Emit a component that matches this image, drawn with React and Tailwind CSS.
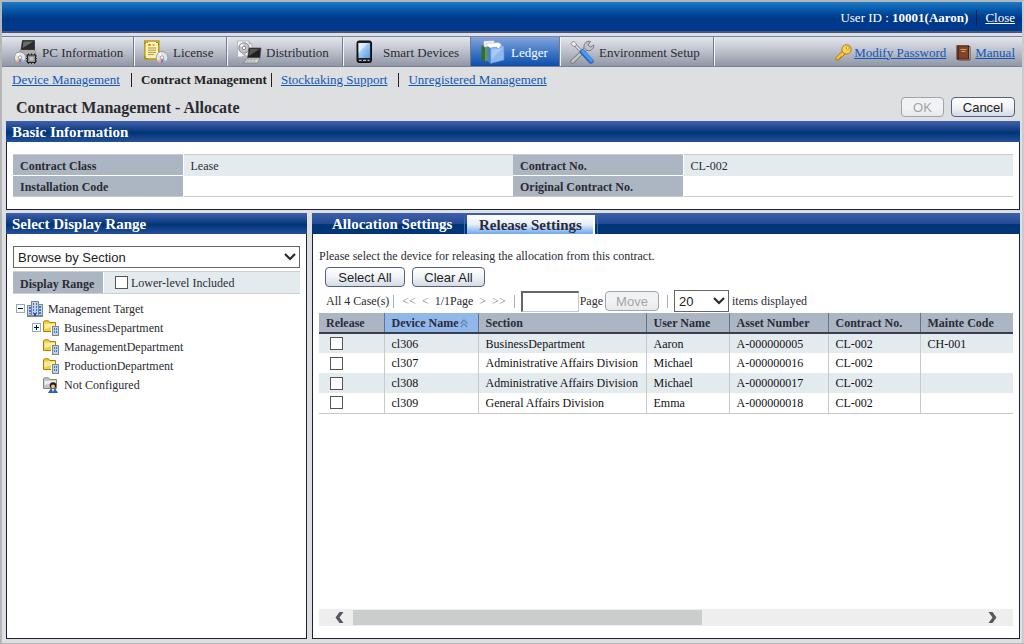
import { useState } from "react";

const devices = [
    { id: "cl306", section: "BusinessDepartment", user: "Aaron", asset: "A-000000005", contract: "CL-002", mainte: "CH-001" },
    { id: "cl307", section: "Administrative Affairs Division", user: "Michael", asset: "A-000000016", contract: "CL-002", mainte: "" },
    { id: "cl308", section: "Administrative Affairs Division", user: "Michael", asset: "A-000000017", contract: "CL-002", mainte: "" },
    { id: "cl309", section: "General Affairs Division", user: "Emma", asset: "A-000000018", contract: "CL-002", mainte: "" }
];

const Disc = ({ x, y, r = 6 }) => (
    <g>
        <circle cx={x} cy={y} r={r} fill="#e4e4e6" stroke="#8b8b90" strokeWidth="0.8" />
        <path d={`M${x} ${y}L${x - 2} ${y + r - 0.6}L${x + 2} ${y + r - 0.6}Z`} fill="#c04fd8" />
        <path d={`M${x} ${y}L${x + 2} ${y + r - 0.6}L${x + 4} ${y + r - 2.4}Z`} fill="#4fd0d8" />
        <path d={`M${x} ${y}L${x - 2} ${y + r - 0.6}L${x - 4} ${y + r - 2.4}Z`} fill="#e8c24a" />
        <path d={`M${x} ${y}L${x - 4} ${y - r + 2}L${x - 1} ${y - r + 0.8}Z`} fill="#fff" />
        <circle cx={x} cy={y} r="1.7" fill="#fff" stroke="#8b8b90" strokeWidth="0.8" />
    </g>
);

const PcIcon = () => (
    <svg width="24" height="24" viewBox="0 0 24 24">
        <path d="M8.5 0.5H20.5V10H7Z" fill="#2c2c2e" stroke="#111" strokeWidth="0.6" />
        <path d="M9.5 1.5H19.5L8.5 8Z" fill="#6b6b6e" />
        <path d="M7 10H20.5L22 14H4Z" fill="#c6c6c8" stroke="#6c6c6c" strokeWidth="0.6" />
        <path d="M6.5 12H20.5" stroke="#88888c" strokeWidth="0.8" />
        <Disc x={6} y={17.5} r={5.6} />
        <path d="M12 16H23M12 18.5H23M12 21H23M14.5 13.5V24M17.5 13.5V24M20.5 13.5V24" stroke="#2b2b2b" strokeWidth="1" />
        <rect x="13.5" y="15" width="8" height="7.5" fill="#8f8f90" stroke="#222" />
        <rect x="15.5" y="17" width="4" height="3.5" fill="#c4c4c4" />
    </svg>
);

const LicenseIcon = () => (
    <svg width="25" height="24" viewBox="0 0 25 24">
        <rect x="0.8" y="1" width="14" height="18" fill="#fdf4bd" stroke="#c79c13" strokeWidth="1.6" />
        <path d="M1 4V2.5H4M12 2.5H14.5V5M1 16V18.5H4" fill="none" stroke="#5c7a20" strokeWidth="0.8" strokeDasharray="2 1" />
        <circle cx="5.5" cy="5" r="1.3" fill="#d8881a" />
        <circle cx="9.5" cy="5" r="1" fill="#d8881a" />
        <path d="M4 8H12M4 10.2H12M4 12.4H12M4 14.6H10" stroke="#9a7a22" strokeWidth="0.8" />
        <Disc x={18} y={17.5} r={5.9} />
    </svg>
);

const DistributionIcon = () => (
    <svg width="25" height="24" viewBox="0 0 25 24">
        <path d="M0.5 1H12L15 4V17H0.5Z" fill="#f4f4f6" stroke="#a9a9b0" strokeWidth="0.8" />
        <path d="M12 1V4H15" fill="#d4d4d8" stroke="#a9a9b0" strokeWidth="0.8" />
        <circle cx="7" cy="8" r="5.2" fill="#c4c4c8" stroke="#707078" strokeWidth="0.8" />
        <path d="M7 8L2.8 6A4.6 4.6 0 0 1 6 3.4Z" fill="#f6f6f6" />
        <circle cx="7" cy="8" r="1.7" fill="#fff" stroke="#777" strokeWidth="0.8" />
        <path d="M5 12L12 20M5 17H11" stroke="#b4b4b8" strokeWidth="2" />
        <path d="M12 8H24L23 18H10.5Z" fill="#202022" stroke="#555" strokeWidth="0.7" />
        <path d="M13 9H22.5L12 16Z" fill="#56565c" />
        <path d="M10.5 18H23L20.5 23H6.5Z" fill="#d9d9db" stroke="#777" strokeWidth="0.7" />
        <path d="M10.5 19.5H20.5M9.5 21.2H19" stroke="#8d8d90" strokeWidth="0.8" strokeDasharray="2 1" />
    </svg>
);

const PhoneIcon = () => (
    <svg width="24" height="24" viewBox="0 0 24 24">
        <defs>
            <linearGradient id="screen" x1="0" y1="0" x2="1" y2="1">
                <stop offset="0" stopColor="#e2effc" />
                <stop offset="1" stopColor="#4f9be8" />
            </linearGradient>
        </defs>
        <rect x="2" y="1" width="14.5" height="21.5" rx="2" fill="#222226" stroke="#0c0c0e" />
        <rect x="3.5" y="3" width="11.5" height="15" fill="url(#screen)" />
        <path d="M3.5 3H13L3.5 13Z" fill="#fff" opacity="0.5" />
        <path d="M4 20.3H6.5M8 20.3H11M12.5 20.3H14.5" stroke="#b8b8c0" strokeWidth="1.2" />
    </svg>
);

const LedgerIcon = () => (
    <svg width="24" height="24" viewBox="0 0 24 24">
        <path d="M0.5 6L4 4.5V20.5L0.5 21Z" fill="#356b35" />
        <path d="M4 4.5H9V21H4Z" fill="#5e9a50" />
        <path d="M2.5 1L13 0.5L14.5 6L6 7H3Z" fill="#f4f4f2" stroke="#99a" strokeWidth="0.5" />
        <path d="M5 3.5L18 2.5L21 5.5L18 9H8Z" fill="#fff" stroke="#aab" strokeWidth="0.5" />
        <path d="M6.5 6L9.5 8V23.5L6.5 21Z" fill="#4a7fcb" />
        <path d="M9.5 8L15.5 7L17.5 9.5L20 5.5L23 6V20L9.5 23.5Z" fill="#8db8f0" stroke="#5a8cd4" strokeWidth="0.6" />
        <path d="M10.5 10L22 8L10.5 19Z" fill="#b5d4fa" opacity="0.7" />
    </svg>
);

const ToolsIcon = () => (
    <svg width="25" height="24" viewBox="0 0 25 24">
        <path d="M2.5 21.5L16.5 8" stroke="#6f6f74" strokeWidth="4.4" strokeLinecap="round" />
        <path d="M2.5 21.5L16.5 8" stroke="#c4c4c8" strokeWidth="2.8" strokeLinecap="round" />
        <path d="M20.5 1.5C17 0.5 13.5 3 14 7.5L17 10.5C20.5 11.5 24 9 23.8 5L20.5 7L18 5Z" fill="#c2c2c6" stroke="#6f6f74" strokeWidth="0.9" />
        <path d="M2 2L12 12" stroke="#6e6e72" strokeWidth="2.8" />
        <path d="M2 2L12 12" stroke="#f0f0f2" strokeWidth="1.4" />
        <path d="M1 3.5L3.5 1L6.5 4L5.5 6.5L3 6Z" fill="#efeff0" stroke="#77777b" strokeWidth="0.7" />
        <path d="M12.5 12L21 21" stroke="#1f68c6" strokeWidth="5.4" strokeLinecap="round" />
        <path d="M12.7 11.4L21.4 20.4" stroke="#4b98ee" strokeWidth="3.2" strokeLinecap="round" />
    </svg>
);

const KeyIcon = () => (
    <svg width="17" height="17" viewBox="0 0 17 17">
        <path d="M8 6.5L1 13.5V16H4V14.5H5.5V13H7L10.5 9.5Z" fill="#f5c33a" stroke="#a8740a" strokeWidth="0.9" />
        <circle cx="11.5" cy="5.4" r="4.7" fill="#f9cf4e" stroke="#a8740a" strokeWidth="0.9" />
        <circle cx="12.8" cy="4" r="1.4" fill="#fff" stroke="#a8740a" strokeWidth="0.7" />
    </svg>
);

const ManualIcon = () => (
    <svg width="15" height="16" viewBox="0 0 15 16">
        <path d="M12 1.5H14V15H3L1 14" fill="#e9dccb" stroke="#4b2514" strokeWidth="0.8" />
        <rect x="1" y="0.8" width="11.5" height="13.2" fill="#7e432a" stroke="#4b2514" />
        <path d="M2.5 1V14" stroke="#552a18" />
        <path d="M4.5 4.5H10.5M5.5 6.5H9.5" stroke="#d4a354" />
    </svg>
);

const Building = ({ x = 0, y = 0, w = 6, h = 12 }) => (
    <g>
        <rect x={x + 0.5} y={y + 0.5} width={w - 1} height={h - 1} fill="#c6cfdb" stroke="#7d8794" />
        <path d={`M${x + 2.5} ${y + 2}V${y + h - 2}M${x + w - 2.5} ${y + 2}V${y + h - 2}`} stroke="#2f7de0" strokeDasharray="2 1" />
    </g>
);

const CompanyIcon = () => (
    <svg width="16" height="16" viewBox="0 0 16 16">
        <Building x={0} y={4} w={6} h={11} />
        <Building x={10} y={3} w={6} h={12} />
        <Building x={4} y={0} w={8} h={15} />
        <path d="M7 12H9V15H7Z" fill="#1f4f9c" />
        <path d="M0 15.5H16" stroke="#7d8590" />
    </svg>
);

const FolderIcon = () => (
    <svg width="16" height="16" viewBox="0 0 16 16">
        <path d="M0.5 11.5V2L1.5 0.8H5.5L6.8 2.5H12.5V11.5Z" fill="#f6cf3c" stroke="#ab7d12" />
        <path d="M1.5 4L12 3.5V6L1.5 9Z" fill="#fff0a0" />
        <rect x="8" y="6" width="7.5" height="10" fill="#fff" />
        <Building x={9} y={6} w={7} h={10} />
    </svg>
);

const UnassignedIcon = () => (
    <svg width="16" height="16" viewBox="0 0 16 16">
        <path d="M0.5 11.5V2L1.5 0.8H5.5L6.8 2.5H13.5V11.5Z" fill="#c4c4c4" stroke="#858585" />
        <path d="M1.5 4L13 3.5V5L1.5 8Z" fill="#ececec" />
        <circle cx="10" cy="8.5" r="3.2" fill="#2a1a12" />
        <circle cx="10" cy="9.5" r="2" fill="#f3bf8e" />
        <path d="M5 16L7.5 12H12.5L15 16Z" fill="#2b60b8" />
        <path d="M8.8 12L10 15L11.2 12Z" fill="#fff" />
    </svg>
);

const Chevron = () => (
    <svg className="pointer-events-none absolute right-1 top-1/2 -translate-y-1/2" width="12" height="8" viewBox="0 0 12 8">
        <path d="M1 1L6 6L11 1" fill="none" stroke="#2b2b2b" strokeWidth="2.2" />
    </svg>
);

const Check = (props) => (
    <input
        type="checkbox"
        className="block size-[13px] shrink-0 appearance-none border border-[#555] bg-white checked:bg-[#2f6fc4]"
        {...props}
    />
);

const Button = ({ children, className = "", ...props }) => (
    <button
        type="button"
        className={`rounded-[4px] border border-[#55627c] bg-linear-to-b from-white via-[#f1f3f6] to-[#d3dbe6] pt-px text-center font-[Liberation_Sans,sans-serif] text-[13px] leading-[17px] text-[#222] disabled:border-[#a0a3a8] disabled:from-[#f0f1f2] disabled:to-[#e8e9eb] disabled:text-[#a3a6a8] ${className}`}
        {...props}
    >
        {children}
    </button>
);

const NavTab = ({ icon, label, active, className }) => (
    <button
        type="button"
        className={`flex h-full items-center whitespace-nowrap border-r border-[#727a92] shadow-[1px_0_0_#f4f5f8] ${active ? "bg-linear-to-b from-[#85a5dc] via-[#3a74c4] via-55% to-[#0b4eab] text-white" : ""} ${className}`}
    >
        {icon}
        <span className="pt-0.5">{label}</span>
    </button>
);

const PanelHeader = ({ children }) => (
    <h2 className="h-[21px] bg-linear-to-b from-[#3f61ae] via-[#003577] via-55% to-[#24509a] px-1.5 text-[15px] font-bold leading-[23px] text-white">
        {children}
    </h2>
);

const Bar = () => <span className="h-[13px] w-px bg-[#a9b2be]" />;

const TreeItem = ({ toggle, icon, label, child }) => (
    <li className={`flex h-[19px] items-center ${child ? "pl-[19px]" : "pl-[3px]"}`}>
        <span className="flex w-[11px] justify-start">
            {toggle && (
                <button type="button" aria-label={`Toggle ${label}`} className="block">
                    <svg width="9" height="9" viewBox="0 0 9 9">
                        <rect x="0.5" y="0.5" width="8" height="8" fill="#fff" stroke="#8aaad6" />
                        <path d={toggle === "plus" ? "M2 4.5H7M4.5 2V7" : "M2 4.5H7"} stroke="#111" />
                    </svg>
                </button>
            )}
        </span>
        {icon}
        <span className="pl-[5px]">{label}</span>
    </li>
);

const labelCell = "w-[17%] border-r border-white bg-[#abb6c2] px-[7px] pt-px text-left font-bold";
const valueCell = "w-[33%] px-[7px] pt-px text-left";
const headCell = "border-r border-[#5f7592] px-[7px] text-left font-bold last:border-r-0";
const bodyCell = "border-r border-[#c9c9cc] px-[7px] last:border-r-0";

const App = () => {
    const [selected, setSelected] = useState([]);
    const [page, setPage] = useState("");

    const toggleDevice = (id) => {
        setSelected((prev) =>
            prev.includes(id) ? prev.filter((item) => item !== id) : [...prev, id]
        );
    };

    return (
        <div className="flex min-h-screen flex-col border-x-2 border-b border-t-2 border-[#b4b6b8] border-r-[#c9cbcd] bg-[#dddfe0] font-[Liberation_Serif,serif] text-[12px] leading-[16px] text-[#2b2b33]">

            {/* TOP BAR */}
            <header className="flex h-[31px] items-center justify-end border-b-2 border-[#49557c] bg-linear-to-b from-[#1b7ac8] via-[#00388a] via-55% to-[#003a8c] pr-[7px] pt-0.5 text-[13px] text-white">
                <span>User ID : <strong>10001(Aaron)</strong></span>
                <span className="mx-2 h-4 w-px bg-[#062052]" />
                <a href="#close" className="underline">Close</a>
            </header>

            {/* MAIN NAVIGATION */}
            <nav className="mt-[3px] flex h-[31px] items-center justify-between border-b border-t border-[#7b839c] bg-linear-to-b from-[#e4e6ec] via-[#bcc0cc] to-[#9196a6] text-[13px]">
                <div className="flex h-full items-center">
                    <NavTab icon={<PcIcon />} label="PC Information" className="w-[132px] gap-1 pl-3" />
                    <NavTab icon={<LicenseIcon />} label="License" className="w-[93px] gap-1 pl-2.5" />
                    <NavTab icon={<DistributionIcon />} label="Distribution" className="w-[116px] gap-1 pl-2.5" />
                    <NavTab icon={<PhoneIcon />} label="Smart Devices" className="w-[128px] gap-1 pl-3" />
                    <NavTab icon={<LedgerIcon />} label="Ledger" active className="w-[89px] gap-1.5 pl-2.5" />
                    <NavTab icon={<ToolsIcon />} label="Environment Setup" className="w-[154px] gap-1 pl-2.5" />
                </div>
                <div className="flex items-center pr-[7px] pt-0.5 text-[#1157b8]">
                    <KeyIcon />
                    <a href="#password" className="ml-0.5 underline">Modify Password</a>
                    <span className="ml-2.5"><ManualIcon /></span>
                    <a href="#manual" className="ml-1 underline">Manual</a>
                </div>
            </nav>

            {/* SUB NAVIGATION */}
            <nav className="flex h-[26px] items-center pl-2.5 text-[13px] text-[#1157b8]">
                <a href="#device" className="underline">Device Management</a>
                <span className="ml-[11px] mr-[9px] h-3.5 w-px bg-[#222]" />
                <strong className="text-[#222]">Contract Management</strong>
                <span className="ml-1 mr-[9px] h-3.5 w-px bg-[#222]" />
                <a href="#stocktaking" className="underline">Stocktaking Support</a>
                <span className="ml-[11px] mr-[9px] h-3.5 w-px bg-[#222]" />
                <a href="#unregistered" className="underline">Unregistered Management</a>
            </nav>

            <main className="flex flex-1 flex-col pb-1 pl-1 pr-0.5">
                <div className="flex h-7 items-center justify-between pl-2.5 pr-[5px]">
                    <h1 className="pt-0.5 text-[16px] font-bold">Contract Management - Allocate</h1>
                    <div className="flex gap-[7px]">
                        <Button disabled className="w-[43px]">OK</Button>
                        <Button className="w-16">Cancel</Button>
                    </div>
                </div>

                {/* BASIC INFORMATION */}
                <section>
                    <PanelHeader>Basic Information</PanelHeader>
                    <div className="border border-t-0 border-[#1c2138] bg-white px-1.5 pb-3 pt-3">
                        <table className="w-full table-fixed border-y border-[#c8cacc]">
                            <tbody>
                                <tr className="h-[21px] bg-[#e4ebef]">
                                    <th className={`${labelCell} border-b`}>Contract Class</th>
                                    <td className={valueCell}>Lease</td>
                                    <th className={`${labelCell} border-b`}>Contract No.</th>
                                    <td className={valueCell}>CL-002</td>
                                </tr>
                                <tr className="h-[21px]">
                                    <th className={labelCell}>Installation Code</th>
                                    <td className={valueCell}></td>
                                    <th className={labelCell}>Original Contract No.</th>
                                    <td className={valueCell}></td>
                                </tr>
                            </tbody>
                        </table>
                    </div>
                </section>

                <div className="mt-[3px] flex flex-1 gap-[5px]">

                    {/* DISPLAY RANGE */}
                    <section className="flex w-[301px] shrink-0 flex-col">
                        <PanelHeader>Select Display Range</PanelHeader>
                        <div className="flex-1 border border-t-0 border-[#1c2138] bg-white px-1.5 pt-3">
                            <div className="relative">
                                <select
                                    aria-label="Browse by"
                                    className="block h-[22px] w-full appearance-none border border-[#666] bg-white px-1 pt-px font-[Liberation_Sans,sans-serif] text-[13px] text-[#222]"
                                >
                                    <option>Browse by Section</option>
                                </select>
                                <Chevron />
                            </div>
                            <div className="mt-[3px] flex h-[23px] items-center border-y border-[#cfcfd2] bg-[#e4ebef]">
                                <span className="flex h-full w-[91px] items-center border-r border-white bg-[#abb6c2] pl-[7px] pt-0.5 font-bold">
                                    Display Range
                                </span>
                                <label className="flex items-center gap-[3px] pl-[11px]">
                                    <Check />
                                    Lower-level Included
                                </label>
                            </div>
                            <ul className="mt-[5px]">
                                <TreeItem toggle="minus" icon={<CompanyIcon />} label="Management Target" />
                                <TreeItem child toggle="plus" icon={<FolderIcon />} label="BusinessDepartment" />
                                <TreeItem child icon={<FolderIcon />} label="ManagementDepartment" />
                                <TreeItem child icon={<FolderIcon />} label="ProductionDepartment" />
                                <TreeItem child icon={<UnassignedIcon />} label="Not Configured" />
                            </ul>
                        </div>
                    </section>

                    {/* ALLOCATION */}
                    <section className="flex min-w-0 flex-1 flex-col">
                        <div className="flex h-[21px] items-end bg-linear-to-b from-[#3f61ae] from-0% via-[#244b92] via-50% to-[#003577] to-55% pl-5 text-[15px] font-bold leading-[19px]">
                            <button type="button" className="pt-px text-white">Allocation Settings</button>
                            <span className="ml-3 mr-0.5 h-[17px] w-px bg-[#3a6bb0]" />
                            <button type="button" className="h-[19px] w-32 border-r-2 border-white bg-linear-to-b from-white via-[#e6eef8] to-[#6ba6ec] pt-px text-[#2b2b3a]">
                                Release Settings
                            </button>
                            <span className="ml-0.5 h-[17px] w-px bg-[#3a6bb0]" />
                        </div>

                        <div className="flex flex-1 flex-col border border-t-0 border-[#1c2138] bg-white px-1.5 pb-3 pt-3.5">
                            <p>Please select the device for releasing the allocation from this contract.</p>
                            <div className="mt-[3px] flex gap-[7px] pl-1.5">
                                <Button className="w-20" onClick={() => setSelected(devices.map((d) => d.id))}>Select All</Button>
                                <Button className="w-[73px]" onClick={() => setSelected([])}>Clear All</Button>
                            </div>

                            {/* PAGER */}
                            <div className="mt-[3px] flex h-[22px] items-center whitespace-nowrap pl-[7px]">
                                <span className="mr-1">All 4 Case(s)</span>
                                <Bar />
                                <button type="button" className="ml-2 text-[#777]">&lt;&lt;</button>
                                <button type="button" className="mx-1.5 text-[#777]">&lt;</button>
                                <span>1/1Page</span>
                                <button type="button" className="mx-1.5 text-[#777]">&gt;</button>
                                <button type="button" className="mr-2 text-[#777]">&gt;&gt;</button>
                                <Bar />
                                <input
                                    type="text"
                                    aria-label="Page number"
                                    value={page}
                                    onChange={(e) => setPage(e.target.value)}
                                    className="ml-1.5 h-[21px] w-[58px] border border-l-2 border-t-2 border-[#c8c8c8] border-l-[#666] border-t-[#666] bg-white px-1"
                                />
                                <span className="ml-px mr-0.5">Page</span>
                                <Button disabled className="w-[54px]">Move</Button>
                                <span className="ml-2 mr-1.5 flex"><Bar /></span>
                                <span className="relative">
                                    <select
                                        aria-label="Items displayed"
                                        className="block h-[22px] w-[55px] appearance-none border border-[#666] bg-white px-1 pt-px font-[Liberation_Sans,sans-serif] text-[13px] text-[#222]"
                                    >
                                        <option>20</option>
                                    </select>
                                    <Chevron />
                                </span>
                                <span className="ml-[3px]">items displayed</span>
                            </div>

                            <table className="mt-px w-full table-fixed border-b border-[#c9c9cc] text-[#111]">
                                <thead>
                                    <tr className="h-5 border-b-2 border-[#3c3f52] bg-[#abb6c2] text-[#2b2b3a]">
                                        <th className={`${headCell} w-[65px]`}>Release</th>
                                        <th className={`${headCell} w-[94px] whitespace-nowrap bg-[#92b7ea]`}>
                                            Device Name
                                            <svg className="ml-0.5 inline" width="8" height="9" viewBox="0 0 8 9">
                                                <path d="M0.7 4.5L4 1L7.3 4.5M0.7 8.2L4 4.7L7.3 8.2" fill="none" stroke="#5a7fae" strokeWidth="1.1" />
                                            </svg>
                                        </th>
                                        <th className={`${headCell} w-[168px]`}>Section</th>
                                        <th className={`${headCell} w-[83px]`}>User Name</th>
                                        <th className={`${headCell} w-[99px]`}>Asset Number</th>
                                        <th className={`${headCell} w-[92px]`}>Contract No.</th>
                                        <th className={headCell}>Mainte Code</th>
                                    </tr>
                                </thead>
                                <tbody>
                                    {devices.map((device) => (
                                        <tr key={device.id} className="h-5 odd:bg-[#e4ebef]">
                                            <td className="border-r border-[#c9c9cc] pl-[11px]">
                                                <Check
                                                    aria-label={`Release ${device.id}`}
                                                    checked={selected.includes(device.id)}
                                                    onChange={() => toggleDevice(device.id)}
                                                />
                                            </td>
                                            <td className={bodyCell}>{device.id}</td>
                                            <td className={`${bodyCell} whitespace-nowrap`}>{device.section}</td>
                                            <td className={bodyCell}>{device.user}</td>
                                            <td className={bodyCell}>{device.asset}</td>
                                            <td className={bodyCell}>{device.contract}</td>
                                            <td className={bodyCell}>{device.mainte}</td>
                                        </tr>
                                    ))}
                                </tbody>
                            </table>

                            {/* HORIZONTAL SCROLL */}
                            <div className="mt-auto flex h-[17px] items-center bg-[#eeeeee] pl-4 pr-3">
                                <button type="button" aria-label="Scroll left" className="w-[18px]">
                                    <svg width="10" height="11" viewBox="0 0 10 11">
                                        <path d="M4.5 0H8.5L4.5 5.5L8.5 11H4.5L0.5 5.5Z" fill="#55585e" />
                                    </svg>
                                </button>
                                <div className="h-[15px] flex-1">
                                    <div className="h-full w-[55%] bg-[#cbcccc]" />
                                </div>
                                <button type="button" aria-label="Scroll right" className="pr-1">
                                    <svg width="10" height="11" viewBox="0 0 10 11">
                                        <path d="M5.5 0H1.5L5.5 5.5L1.5 11H5.5L9.5 5.5Z" fill="#55585e" />
                                    </svg>
                                </button>
                            </div>
                        </div>
                    </section>
                </div>
            </main>
        </div>
    );
};

export default App;
